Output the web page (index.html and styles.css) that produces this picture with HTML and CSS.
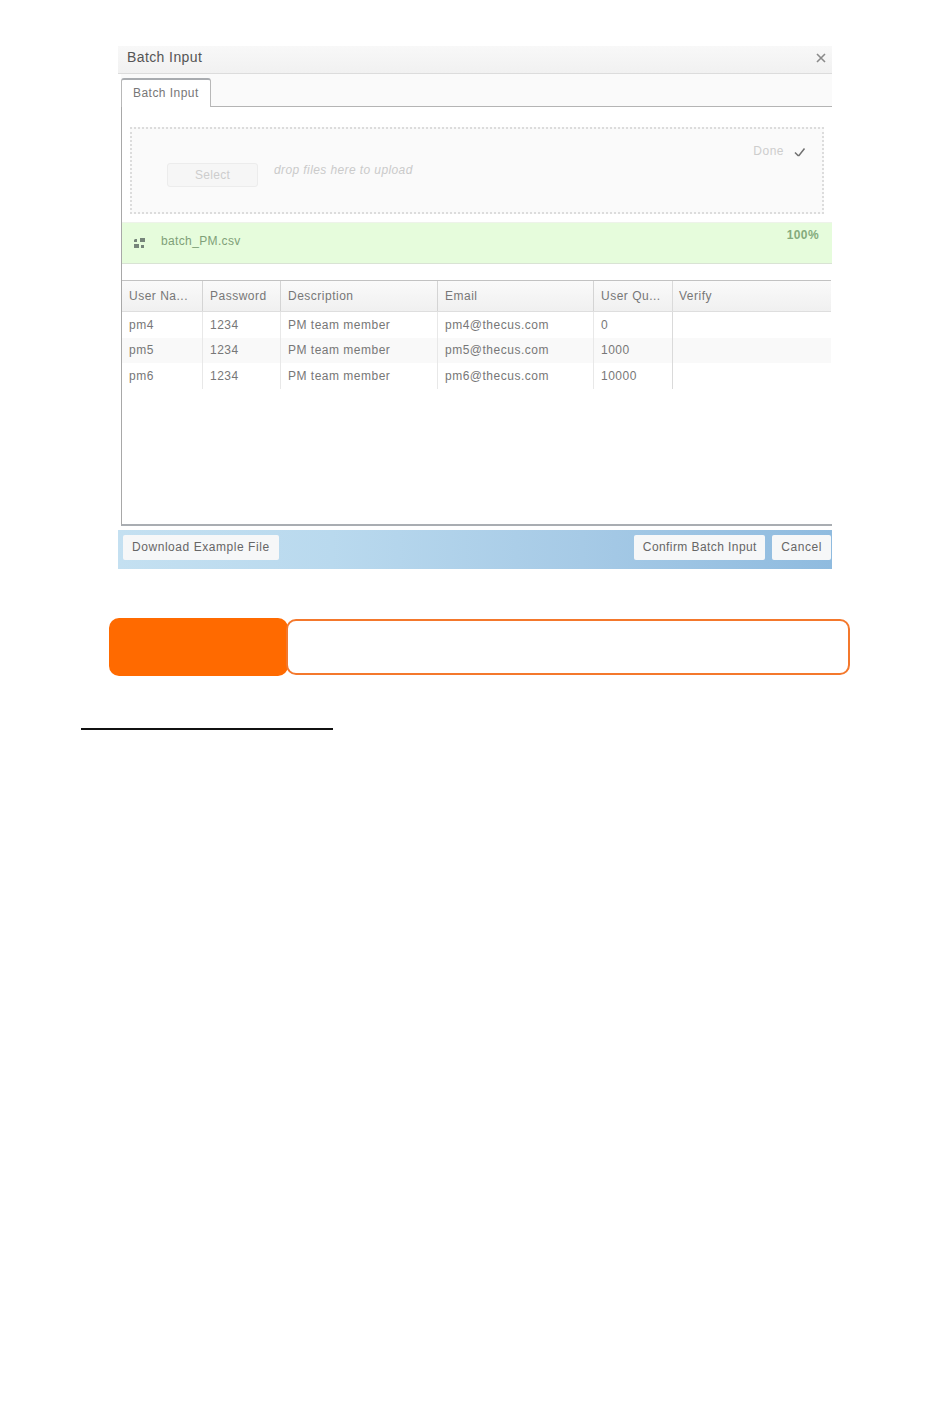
FILE: index.html
```html
<!DOCTYPE html>
<html lang="en">
<head>
<meta charset="utf-8">
<title>Batch Input</title>
<link rel="stylesheet" href="styles.css">
</head>
<body>
<div class="page">
  <section class="dialog">
    <header class="title-bar">
      <span class="title">Batch Input</span>
      <svg class="close" width="10" height="10" viewBox="0 0 10 10"><path d="M1 1l8 8M9 1l-8 8" stroke="#8a8a8a" stroke-width="1.6" fill="none"/></svg>
    </header>
    <div class="tab-strip"><div class="tab">Batch Input</div></div>
    <div class="panel">
      <div class="dropzone">
        <div class="drop-left">
          <div class="select-btn">Select</div>
          <span class="drop-hint">drop files here to upload</span>
        </div>
        <div class="done">
          <span>Done</span>
          <svg width="12" height="10" viewBox="0 0 12 10"><path d="M1 5.500l3 3 1 0 5.500-7" stroke="#707070" stroke-width="1.5" fill="none"/></svg>
        </div>
      </div>
      <div class="file-row">
        <svg class="file-icon" width="13" height="12" viewBox="0 0 13 12"><path d="M2 2h2v3H1V3zM7 1h5v4H7zM1 7h5v4H1zM8 8h3v3H8z" fill="#76857a"/></svg>
        <span class="file-name">batch_PM.csv</span>
        <span class="percent">100%</span>
      </div>
      <div class="grid">
        <div class="row head">
          <div class="cell">User Na...</div>
          <div class="cell">Password</div>
          <div class="cell">Description</div>
          <div class="cell">Email</div>
          <div class="cell">User Qu...</div>
          <div class="cell">Verify</div>
        </div>
        <div class="row r1">
          <div class="cell">pm4</div>
          <div class="cell">1234</div>
          <div class="cell">PM team member</div>
          <div class="cell">pm4@thecus.com</div>
          <div class="cell">0</div>
          <div class="cell"></div>
        </div>
        <div class="row alt r2">
          <div class="cell">pm5</div>
          <div class="cell">1234</div>
          <div class="cell">PM team member</div>
          <div class="cell">pm5@thecus.com</div>
          <div class="cell">1000</div>
          <div class="cell"></div>
        </div>
        <div class="row r3">
          <div class="cell">pm6</div>
          <div class="cell">1234</div>
          <div class="cell">PM team member</div>
          <div class="cell">pm6@thecus.com</div>
          <div class="cell">10000</div>
          <div class="cell"></div>
        </div>
      </div>
    </div>
    <footer class="footer">
      <div class="btn">Download Example File</div>
      <div class="footer-right">
        <div class="btn btn-tight">Confirm Batch Input</div>
        <div class="btn">Cancel</div>
      </div>
    </footer>
  </section>

  <div class="note">
    <div class="note-label"></div>
    <div class="note-body"></div>
  </div>

  <div class="rule"></div>
</div>
</body>
</html>
```
FILE: styles.css
```css
* { box-sizing: border-box; }
html, body { margin: 0; padding: 0; background: #fff; }
body { font-family: "Liberation Sans", Arial, sans-serif; color: #555; }
.page { width: 950px; height: 1419px; padding-top: 46px; }

.dialog { width: 714px; margin-left: 118px; height: 523px; display: flex; flex-direction: column; }

.title-bar { height: 28px; padding: 0 6px 6px 9px; background: linear-gradient(#f8f8f8, #f1f1f1); border-bottom: 1px solid #dcdcdc; display: flex; align-items: center; justify-content: space-between; }
.title { font-size: 14px; color: #555; letter-spacing: 0.4px; }
.close { margin-top: 2px; }

.tab-strip { height: 33px; margin-left: 3px; padding-top: 4px; background: #fafafa; border-bottom: 1px solid #b4b4b4; display: flex; }
.tab { width: 90px; height: 29px; background: #fff; border: 1px solid #b8b8b8; border-top: 2px solid #a9acb0; border-bottom: 0; border-radius: 3px 3px 0 0; margin-bottom: -1px; padding: 6px 0 0 11px; font-size: 12px; color: #777; letter-spacing: 0.46px; }

.panel { height: 419px; margin-left: 3px; border-left: 1px solid #a8a8a8; border-bottom: 2px solid #a9adb2; padding-top: 20px; background: #fff; }

.dropzone { width: 694px; height: 87px; margin-left: 8px; border: 2px dotted #dcdcdc; background: #fafafa; display: flex; justify-content: space-between; }
.drop-left { display: flex; align-items: flex-start; padding: 34px 0 0 35px; gap: 16px; }
.select-btn { width: 91px; height: 24px; border: 1px solid #ececec; border-radius: 3px; background: #f6f6f6; text-align: center; font-size: 12px; line-height: 23px; color: #cdcdcd; letter-spacing: 0.3px; }
.drop-hint { font-size: 12px; font-style: italic; color: #cacaca; line-height: 14px; letter-spacing: 0.4px; }
.done { display: flex; align-items: flex-start; gap: 10px; padding: 15px 16px 0 0; font-size: 12px; color: #cdcdcd; letter-spacing: 0.5px; }
.done svg { margin-top: 3px; }

.file-row { height: 42px; margin-top: 8px; padding: 0 13px 0 11px; background: #e6fcdc; border-top: 1px solid #eef3ea; border-bottom: 1px solid #d9e3d4; display: flex; align-items: flex-start; font-size: 12px; color: #7fa078; }
.file-icon { margin-top: 14px; }
.file-name { margin: 11px 0 0 15px; letter-spacing: 0.36px; }
.percent { margin: 5px 0 0 auto; font-weight: bold; color: #84ab7d; letter-spacing: 0.4px; }

.grid { margin-top: 16px; width: 709px; border-top: 1px solid #c2c2c2; }
.row { display: grid; grid-template-columns: 81px 78px 157px 156px 79px 158px; font-size: 12px; color: #777; letter-spacing: 0.5px; }
.row .cell { padding-left: 7px; border-right: 1px solid #e8e8e8; white-space: nowrap; overflow: hidden; }
.row .cell:nth-child(5) { border-right-color: #dadada; }
.head { height: 31px; background: linear-gradient(#fafafa, #f0f0f0); border-bottom: 1px solid #dedede; line-height: 30px; }
.head .cell { border-right-color: #d4d4d4; }
.r1 { height: 26px; line-height: 26px; }
.r2 { height: 25px; line-height: 25px; }
.r3 { height: 26px; line-height: 27px; }
.alt { background: #f9f9f9; }
.row .cell:last-child { border-right: 0; padding-left: 6px; }

.footer { height: 39px; margin-top: 4px; padding: 5px 1px 0 5px; background: linear-gradient(90deg, #c4e0f1 0%, #b9d9ee 30%, #a6cae6 65%, #8fbbdf 100%); display: flex; justify-content: space-between; align-items: flex-start; }
.footer-right { display: flex; gap: 7px; }
.btn { height: 25px; padding: 0 9px; background: #f6f7f8; border-radius: 2px; font-size: 12px; line-height: 25px; color: #666; letter-spacing: 0.55px; }
.btn-tight { letter-spacing: 0.42px; padding: 0 8.500px; }

.note { margin: 49px 0 0 109px; width: 741px; height: 58px; display: flex; align-items: center; }
.note-label { width: 179px; height: 58px; background: #ff6a00; border-radius: 10px; flex: none; }
.note-body { flex: 1; height: 56px; margin-left: -2px; border: 2px solid #f4782c; border-radius: 10px; background: #fff; }

.rule { width: 252px; height: 2px; margin: 52px 0 0 81px; background: #111; }
```
